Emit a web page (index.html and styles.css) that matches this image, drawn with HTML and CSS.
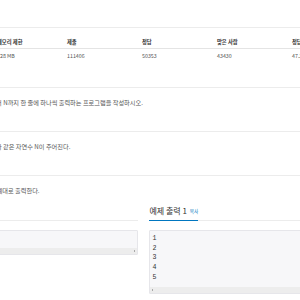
FILE: index.html
```html
<!DOCTYPE html>
<html>
<head>
  <meta charset="UTF-8">
  <title>N 찍기</title>
  <link rel="stylesheet" href="styles.css">
</head>
<body>
  <div class="page">
    <div class="info">
      <div class="info-head">시간 제한</div>
      <div class="info-head">메모리 제한</div>
      <div class="info-head">제출</div>
      <div class="info-head">정답</div>
      <div class="info-head">맞은 사람</div>
      <div class="info-head">정답 비율</div>
      <div class="info-cell">1 초</div>
      <div class="info-cell">128 MB</div>
      <div class="info-cell">111406</div>
      <div class="info-cell">50353</div>
      <div class="info-cell">43430</div>
      <div class="info-cell">47.364%</div>
    </div>

    <div class="headline"><span class="headline-title">문제</span></div>
    <p class="desc">자연수 N이 주어졌을 때, 1부터 N까지 한 줄에 하나씩 출력하는 프로그램을 작성하시오.</p>

    <div class="headline"><span class="headline-title">입력</span></div>
    <p class="desc">첫째 줄에 100,000보다 작거나 같은 자연수 N이 주어진다.</p>

    <div class="headline"><span class="headline-title">출력</span></div>
    <p class="desc">첫째 줄부터 N번째 줄까지 차례대로 출력한다.</p>

    <div class="samples">
      <div class="sample">
        <div class="headline sample-headline"><span class="headline-title">예제 입력 1 <span class="copy">복사</span></span></div>
        <div class="sample-box">
          <pre class="sample-data">5</pre>
          <div class="scroll-strip scroll-end"><span class="tick"></span></div>
        </div>
      </div>
      <div class="sample">
        <div class="headline sample-headline"><span class="headline-title">예제 출력 1 <span class="copy">복사</span></span></div>
        <div class="sample-box">
          <pre class="sample-data">1
2
3
4
5</pre>
          <div class="scroll-strip"><span class="tick"></span></div>
        </div>
      </div>
    </div>
  </div>
</body>
</html>
```

FILE: styles.css
```css
:root {
  --line-color: #ececec;
  --text-color: #333;
  --light-text: #555;
  --link-color: #0076c0;
  --pre-bg: #f7f7f9;
  --pre-border: #e6e6ea;
}

html, body {
  margin: 0;
  padding: 0;
  width: 300px;
  height: 300px;
  overflow: hidden;
  background: #fff;
}

body {
  font-family: "Noto Sans CJK KR", "Noto Sans", sans-serif;
  color: var(--text-color);
}

.page {
  width: 438px;
  margin-left: -76px;
  padding-top: 27px;
}

/* problem info table */
.info {
  display: grid;
  grid-template-columns: 77px 70px repeat(4, 75px);
  margin-left: -4px;
  border-top: 1px solid var(--line-color);
  font-size: 5.3px;
}

.info-head {
  font-weight: bold;
  line-height: 8px;
  padding: 10px 0 2px;
  border-bottom: 1px solid #e4e4e4;
  white-space: nowrap;
}

.info-cell {
  color: var(--light-text);
  line-height: 8px;
  padding: 3px 0 2px;
  white-space: nowrap;
}

/* section headlines */
.headline {
  display: flex;
  margin-top: 10px;
  border-bottom: 1px solid var(--line-color);
}

.info + .headline {
  margin-top: 11px;
}

.headline-title {
  font-size: 8px;
  line-height: 10px;
  padding-bottom: 4px;
  margin-bottom: -1px;
  border-bottom: 1px solid var(--link-color);
  white-space: nowrap;
}

.copy {
  font-size: 4.6px;
  color: var(--link-color);
  margin-left: 1px;
  vertical-align: 1px;
}

.desc {
  margin: 10px 0 0;
  font-size: 6.2px;
  line-height: 9px;
  color: var(--light-text);
  white-space: nowrap;
}

/* samples */
.samples {
  display: grid;
  grid-template-columns: 1fr 1fr;
  column-gap: 11px;
}

.sample-headline {
  margin-top: 11px;
}

.sample-headline .headline-title {
  padding-left: 1px;
}

.sample-box {
  margin-top: 9px;
  background: var(--pre-bg);
  border: 1px solid var(--pre-border);
  border-radius: 1px;
}

.sample-data {
  margin: 0;
  padding: 3px 3px 4px;
  font-family: "Liberation Mono", "DejaVu Sans Mono", monospace;
  font-size: 6.6px;
  line-height: 9.7px;
  color: #333;
}

.scroll-strip {
  display: flex;
  align-items: center;
  height: 6px;
  padding: 0 2px;
  background: #ededed;
}

.scroll-end {
  justify-content: flex-end;
}

.tick {
  width: 1px;
  height: 2px;
  background: #a8a8a8;
}
```
